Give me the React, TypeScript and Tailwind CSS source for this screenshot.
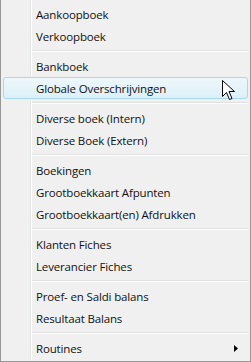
const sections: string[][] = [
  ["Aankoopboek", "Verkoopboek"],
  ["Bankboek", "Globale Overschrijvingen"],
  ["Diverse boek (Intern)", "Diverse Boek (Extern)"],
  ["Boekingen", "Grootboekkaart Afpunten", "Grootboekkaart(en) Afdrukken"],
  ["Klanten Fiches", "Leverancier Fiches"],
  ["Proef- en Saldi balans", "Resultaat Balans"],
  ["Routines"],
];

const Cursor = () => (
  <svg width="13" height="21" viewBox="0 0 13 21" className="absolute right-[12px] top-[2px]">
    <path
      d="M0.5 0.5 L0.5 16.5 L4.5 12.5 L7.5 19.5 L10 18.5 L7 11.5 L12.5 11.5 Z"
      fill="#fff"
      stroke="#000"
      strokeWidth="1"
      strokeLinejoin="miter"
    />
  </svg>
);

const MenuItem = ({ label, hot, sub }: { label: string; hot?: boolean; sub?: boolean }) => (
  <div
    className={`relative h-[22px] flex items-center pl-[32px] rounded-[3px] border ${
      hot ? "border-[#a8d8eb] bg-gradient-to-b from-[#eef7fb] to-[#dcf0f9]" : "border-transparent"
    }`}
  >
    <span className="text-[11.5px] tracking-[-0.15px] leading-none text-[#111] pt-px">{label}</span>
    {hot && <Cursor />}
    {sub && (
      <svg width="4" height="7" viewBox="0 0 4 7" className="absolute right-[9px] top-[7px]">
        <path d="M0 0 L4 3.5 L0 7 Z" fill="#000" />
      </svg>
    )}
  </div>
);

const Separator = () => (
  <div className="h-[8px] flex flex-col justify-center pl-[29px]">
    <div className="h-px bg-[#e0e0e0]" />
    <div className="h-px bg-white" />
  </div>
);

export default function App() {
  return (
    <div
      className="w-[251px] h-[362px] bg-[#f0f0f0] border-x border-b border-[#979797] overflow-hidden"
      style={{ fontFamily: '"Segoe UI", "Open Sans", sans-serif' }}
    >
      <div className="relative h-full pt-[3px] pb-[2px] px-[2px]">
        {/* gutter line */}
        <div className="absolute top-0 bottom-0 left-[29px] w-[2px] flex">
          <div className="w-px bg-[#e2e3e3]" />
          <div className="w-px bg-white" />
        </div>
        <div className="relative flex flex-col">
          {sections.map((items, i) => (
            <div key={i}>
              {i > 0 && <Separator />}
              {items.map((label) => (
                <MenuItem
                  key={label}
                  label={label}
                  hot={label === "Globale Overschrijvingen"}
                  sub={label === "Routines"}
                />
              ))}
            </div>
          ))}
        </div>
      </div>
    </div>
  );
}
